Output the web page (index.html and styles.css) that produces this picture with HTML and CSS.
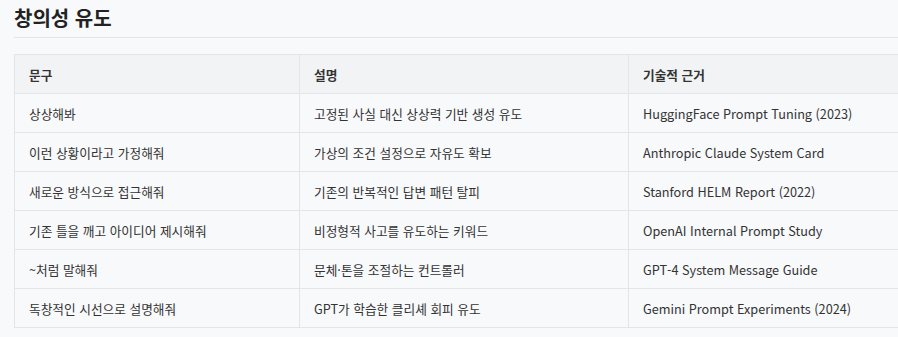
FILE: index.html
```html
<!DOCTYPE html>
<html lang="ko">
<head>
<meta charset="utf-8">
<link rel="stylesheet" href="styles.css">
</head>
<body>
<main class="page">
  <h2 class="title">창의성 유도</h2>
  <div class="scroller">
  <table class="grid">
    <colgroup>
      <col class="c1"><col class="c2"><col class="c3">
    </colgroup>
    <thead>
      <tr><th>문구</th><th>설명</th><th>기술적 근거</th></tr>
    </thead>
    <tbody>
      <tr><td>상상해봐</td><td>고정된 사실 대신 상상력 기반 생성 유도</td><td>HuggingFace Prompt Tuning (2023)</td></tr>
      <tr><td>이런 상황이라고 가정해줘</td><td>가상의 조건 설정으로 자유도 확보</td><td>Anthropic Claude System Card</td></tr>
      <tr><td>새로운 방식으로 접근해줘</td><td>기존의 반복적인 답변 패턴 탈피</td><td>Stanford HELM Report (2022)</td></tr>
      <tr><td>기존 틀을 깨고 아이디어 제시해줘</td><td>비정형적 사고를 유도하는 키워드</td><td>OpenAI Internal Prompt Study</td></tr>
      <tr><td>~처럼 말해줘</td><td>문체·톤을 조절하는 컨트롤러</td><td>GPT-4 System Message Guide</td></tr>
      <tr><td>독창적인 시선으로 설명해줘</td><td>GPT가 학습한 클리셰 회피 유도</td><td>Gemini Prompt Experiments (2024)</td></tr>
    </tbody>
  </table>
  </div>
</main>
</body>
</html>
```
FILE: styles.css
```css
html, body {
  margin: 0;
  padding: 0;
  background: #f8f9fb;
}
body {
  font-family: "Noto Sans CJK KR", "Noto Sans", sans-serif;
  color: #333;
}
.page {
  padding: 0 0 0 14px;
}
.title {
  margin: 0;
  padding: 4px 0 6px;
  font-size: 20px;
  line-height: 27px;
  font-weight: 700;
  color: #222;
  border-bottom: 1px solid #e3e5e8;
  margin-bottom: 16px;
}
.scroller {
  overflow: hidden;
}
.grid {
  border-collapse: collapse;
  width: 960px;
  font-size: 12.7px;
  table-layout: fixed;
}
.c1 { width: 285px; }
.c2 { width: 329px; }
.grid th, .grid td {
  border: 1px solid #e3e5e8;
  height: 39px;
  padding: 0 14px;
  text-align: left;
  box-sizing: border-box;
  white-space: nowrap;
}
.grid th {
  background: #f2f3f5;
  font-weight: 700;
  color: #333;
}
.grid td {
  color: #333;
}
```
